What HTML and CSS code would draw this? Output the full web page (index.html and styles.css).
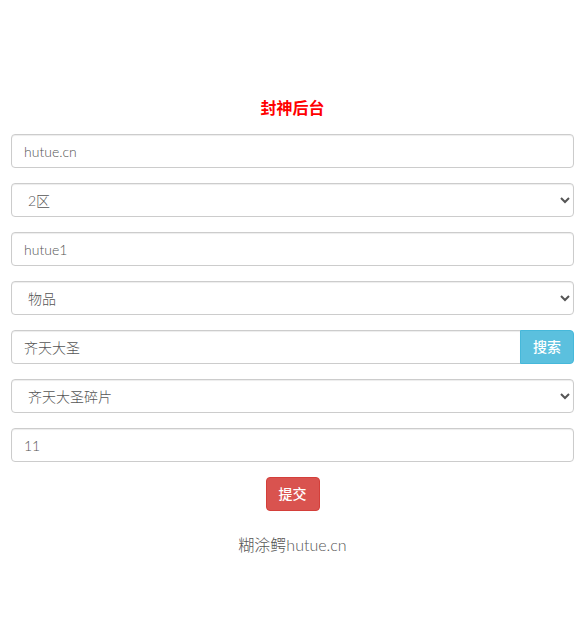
FILE: index.html
```html
<!DOCTYPE html>
<html lang="zh">
<head>
<meta charset="utf-8">
<title>封神后台</title>
<link rel="stylesheet" href="styles.css">
</head>
<body>
<div class="page">
  <h3 class="title">封神后台</h3>
  <form class="form">
    <div class="group"><input class="control" type="text" value="hutue.cn"></div>
    <div class="group">
      <select class="control select"><option>2区</option></select>
    </div>
    <div class="group"><input class="control" type="text" value="hutue1"></div>
    <div class="group">
      <select class="control select"><option>物品</option></select>
    </div>
    <div class="group input-group">
      <input class="control joined" type="text" value="齐天大圣">
      <button type="button" class="btn btn-info">搜索</button>
    </div>
    <div class="group">
      <select class="control select"><option>齐天大圣碎片</option></select>
    </div>
    <div class="group"><input class="control" type="text" value="11"></div>
    <div class="actions">
      <button type="button" class="btn btn-danger">提交</button>
    </div>
  </form>
  <p class="footer">糊涂鳄hutue.cn</p>
</div>
</body>
</html>
```
FILE: styles.css
```css
* { box-sizing: border-box; }
html, body { margin: 0; padding: 0; background: #fff; }
body {
  font-family: "Lato", "Noto Sans CJK SC", sans-serif;
  font-size: 14px;
  color: #333;
}
.page {
  padding: 0 14px 0 11px;
}
.title {
  margin: 98px 0 16px;
  font-size: 16px;
  line-height: 20px;
  font-weight: bold;
  color: #ff0000;
  text-align: center;
}
.form { margin: 0; }
.group { margin-bottom: 15px; }
.control {
  display: block;
  width: 100%;
  height: 34px;
  padding: 6px 12px;
  font-family: "Lato", "Noto Sans CJK SC", sans-serif;
  font-size: 14px;
  font-weight: 300;
  line-height: 20px;
  color: #555;
  background: #fff;
  border: 1px solid #ccc;
  border-radius: 4px;
  box-shadow: inset 0 1px 1px rgba(0,0,0,.075);
  outline: none;
}
.select { padding-left: 12px; }
.input-group { display: flex; }
.input-group .joined {
  flex: 1;
  border-radius: 4px 0 0 4px;
}
.btn {
  display: inline-block;
  height: 34px;
  padding: 6px 12px;
  font-family: "Lato", "Noto Sans CJK SC", sans-serif;
  font-size: 14px;
  font-weight: 500;
  line-height: 20px;
  color: #fff;
  border: 1px solid transparent;
  border-radius: 4px;
  cursor: pointer;
}
.btn-info {
  width: 54px;
  flex: none;
  background: #5bc0de;
  border-color: #46b8da;
  border-radius: 0 4px 4px 0;
  margin-left: -1px;
}
.btn-danger {
  width: 54px;
  background: #d9534f;
  border-color: #d43f3a;
}
.actions { text-align: center; }
.footer {
  margin: 24px 0 0;
  font-size: 16px;
  font-weight: 300;
  line-height: 20px;
  color: #555;
  text-align: center;
}
```
